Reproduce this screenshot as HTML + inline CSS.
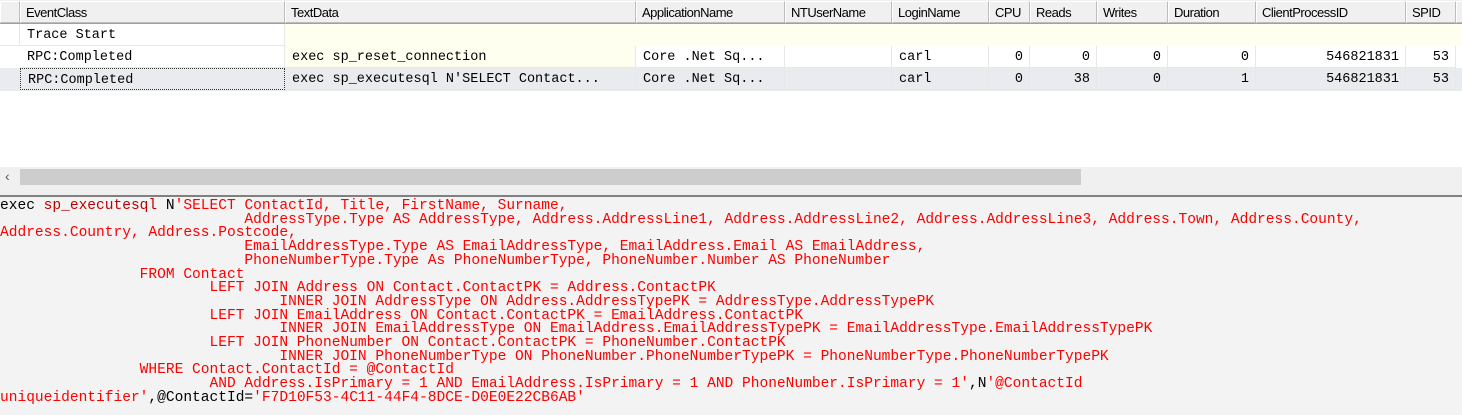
<!DOCTYPE html>
<html><head><meta charset="utf-8"><style>
*{margin:0;padding:0;box-sizing:border-box}
body{width:1462px;height:415px;overflow:hidden;background:#fff;font-family:"Liberation Mono",monospace;position:relative}
.hdr{position:absolute;top:0;left:0;width:1462px;height:24px;background:#f0f0f0;border-bottom:1px solid #a0a0a0}
.hc{position:absolute;top:1px;height:22px;border:1px solid #bdbdbd;border-top-color:#fff;border-left-color:#fff;background:#f0f0f0;font-family:"Liberation Sans",sans-serif;font-size:13px;letter-spacing:-0.5px;color:#000;padding:3px 0 0 5px;white-space:nowrap;overflow:hidden}
.row{position:absolute;left:0;width:1462px;height:22px}
.c{position:absolute;top:0;height:22px;font-size:13.5px;padding:4px 6px 0 7px;white-space:pre;overflow:hidden;color:#000;border-right:1px solid #e8e8e8;border-bottom:1px solid #e8e8e8}
.r{text-align:right}
.scroll{position:absolute;left:0;top:167px;width:1462px;height:21px;background:#f0f0f0}
.thumb{position:absolute;left:20px;top:2px;width:1061px;height:16px;background:#cdcdcd}
.split{position:absolute;left:0;top:188px;width:1462px;height:9px;background:#f0f0f0;border-bottom:2px solid #808080}
.pane{position:absolute;left:0;top:197px;width:1462px;height:218px;background:#f3f3f3}
pre{position:absolute;left:0;top:3px;font-family:"Liberation Mono",monospace;font-size:14.55px;line-height:13.7px;color:#f00;white-space:pre}
.k{color:#000}.d{color:#c00000}
</style></head><body>
<div class="hdr">
<div class="hc" style="left:0;width:20px"></div>
<div class="hc" style="left:20px;width:265px">EventClass</div>
<div class="hc" style="left:285px;width:351px">TextData</div>
<div class="hc" style="left:636px;width:149px">ApplicationName</div>
<div class="hc" style="left:785px;width:107px">NTUserName</div>
<div class="hc" style="left:892px;width:97px">LoginName</div>
<div class="hc" style="left:989px;width:41px">CPU</div>
<div class="hc" style="left:1030px;width:67px">Reads</div>
<div class="hc" style="left:1097px;width:71px">Writes</div>
<div class="hc" style="left:1168px;width:88px">Duration</div>
<div class="hc" style="left:1256px;width:150px">ClientProcessID</div>
<div class="hc" style="left:1406px;width:50px">SPID</div>
<div class="hc" style="left:1456px;width:10px"></div>
</div>
<div class="row" style="top:24px;background:#fffff0">
<div class="c" style="left:0;width:20px;background:#fff"></div>
<div class="c" style="left:20px;width:265px;background:#fff">Trace Start</div>
</div>
<div class="row" style="top:46px;background:#fff">
<div class="c" style="left:20px;width:265px">RPC:Completed</div>
<div class="c" style="left:285px;width:351px;background:#fffff0">exec sp_reset_connection</div>
<div class="c" style="left:636px;width:149px">Core .Net Sq...</div>
<div class="c" style="left:785px;width:107px"></div>
<div class="c" style="left:892px;width:97px">carl</div>
<div class="c r" style="left:989px;width:41px">0</div>
<div class="c r" style="left:1030px;width:67px">0</div>
<div class="c r" style="left:1097px;width:71px">0</div>
<div class="c r" style="left:1168px;width:88px">0</div>
<div class="c r" style="left:1256px;width:150px">546821831</div>
<div class="c r" style="left:1406px;width:50px">53</div>
</div>
<div class="row" style="top:68px;background:#e9ebef;height:23px">
<div class="c" style="left:20px;width:265px;border:1px dotted #333">RPC:Completed</div>
<div class="c" style="left:285px;width:351px">exec sp_executesql N'SELECT Contact...</div>
<div class="c" style="left:636px;width:149px">Core .Net Sq...</div>
<div class="c" style="left:785px;width:107px"></div>
<div class="c" style="left:892px;width:97px">carl</div>
<div class="c r" style="left:989px;width:41px">0</div>
<div class="c r" style="left:1030px;width:67px">38</div>
<div class="c r" style="left:1097px;width:71px">0</div>
<div class="c r" style="left:1168px;width:88px">1</div>
<div class="c r" style="left:1256px;width:150px">546821831</div>
<div class="c r" style="left:1406px;width:50px">53</div>
</div>
<div class="scroll"><span style="position:absolute;left:5px;top:1px;font-family:'Liberation Sans',sans-serif;font-size:14px;color:#555">&lsaquo;</span><div class="thumb"></div></div>
<div class="split"></div>
<div class="pane"><pre><span class="k">exec</span> <span class="d">sp_executesql</span> <span class="k">N</span>'SELECT ContactId, Title, FirstName, Surname,
                            AddressType.Type AS AddressType, Address.AddressLine1, Address.AddressLine2, Address.AddressLine3, Address.Town, Address.County,
Address.Country, Address.Postcode,
                            EmailAddressType.Type AS EmailAddressType, EmailAddress.Email AS EmailAddress,
                            PhoneNumberType.Type As PhoneNumberType, PhoneNumber.Number AS PhoneNumber
                FROM Contact
                        LEFT JOIN Address ON Contact.ContactPK = Address.ContactPK
                                INNER JOIN AddressType ON Address.AddressTypePK = AddressType.AddressTypePK
                        LEFT JOIN EmailAddress ON Contact.ContactPK = EmailAddress.ContactPK
                                INNER JOIN EmailAddressType ON EmailAddress.EmailAddressTypePK = EmailAddressType.EmailAddressTypePK
                        LEFT JOIN PhoneNumber ON Contact.ContactPK = PhoneNumber.ContactPK
                                INNER JOIN PhoneNumberType ON PhoneNumber.PhoneNumberTypePK = PhoneNumberType.PhoneNumberTypePK
                WHERE Contact.ContactId = @ContactId
                        AND Address.IsPrimary = 1 AND EmailAddress.IsPrimary = 1 AND PhoneNumber.IsPrimary = 1'<span class="k">,N</span>'@ContactId
uniqueidentifier'<span class="k">,@ContactId=</span>'F7D10F53-4C11-44F4-8DCE-D0E0E22CB6AB'</pre></div>
</body></html>
